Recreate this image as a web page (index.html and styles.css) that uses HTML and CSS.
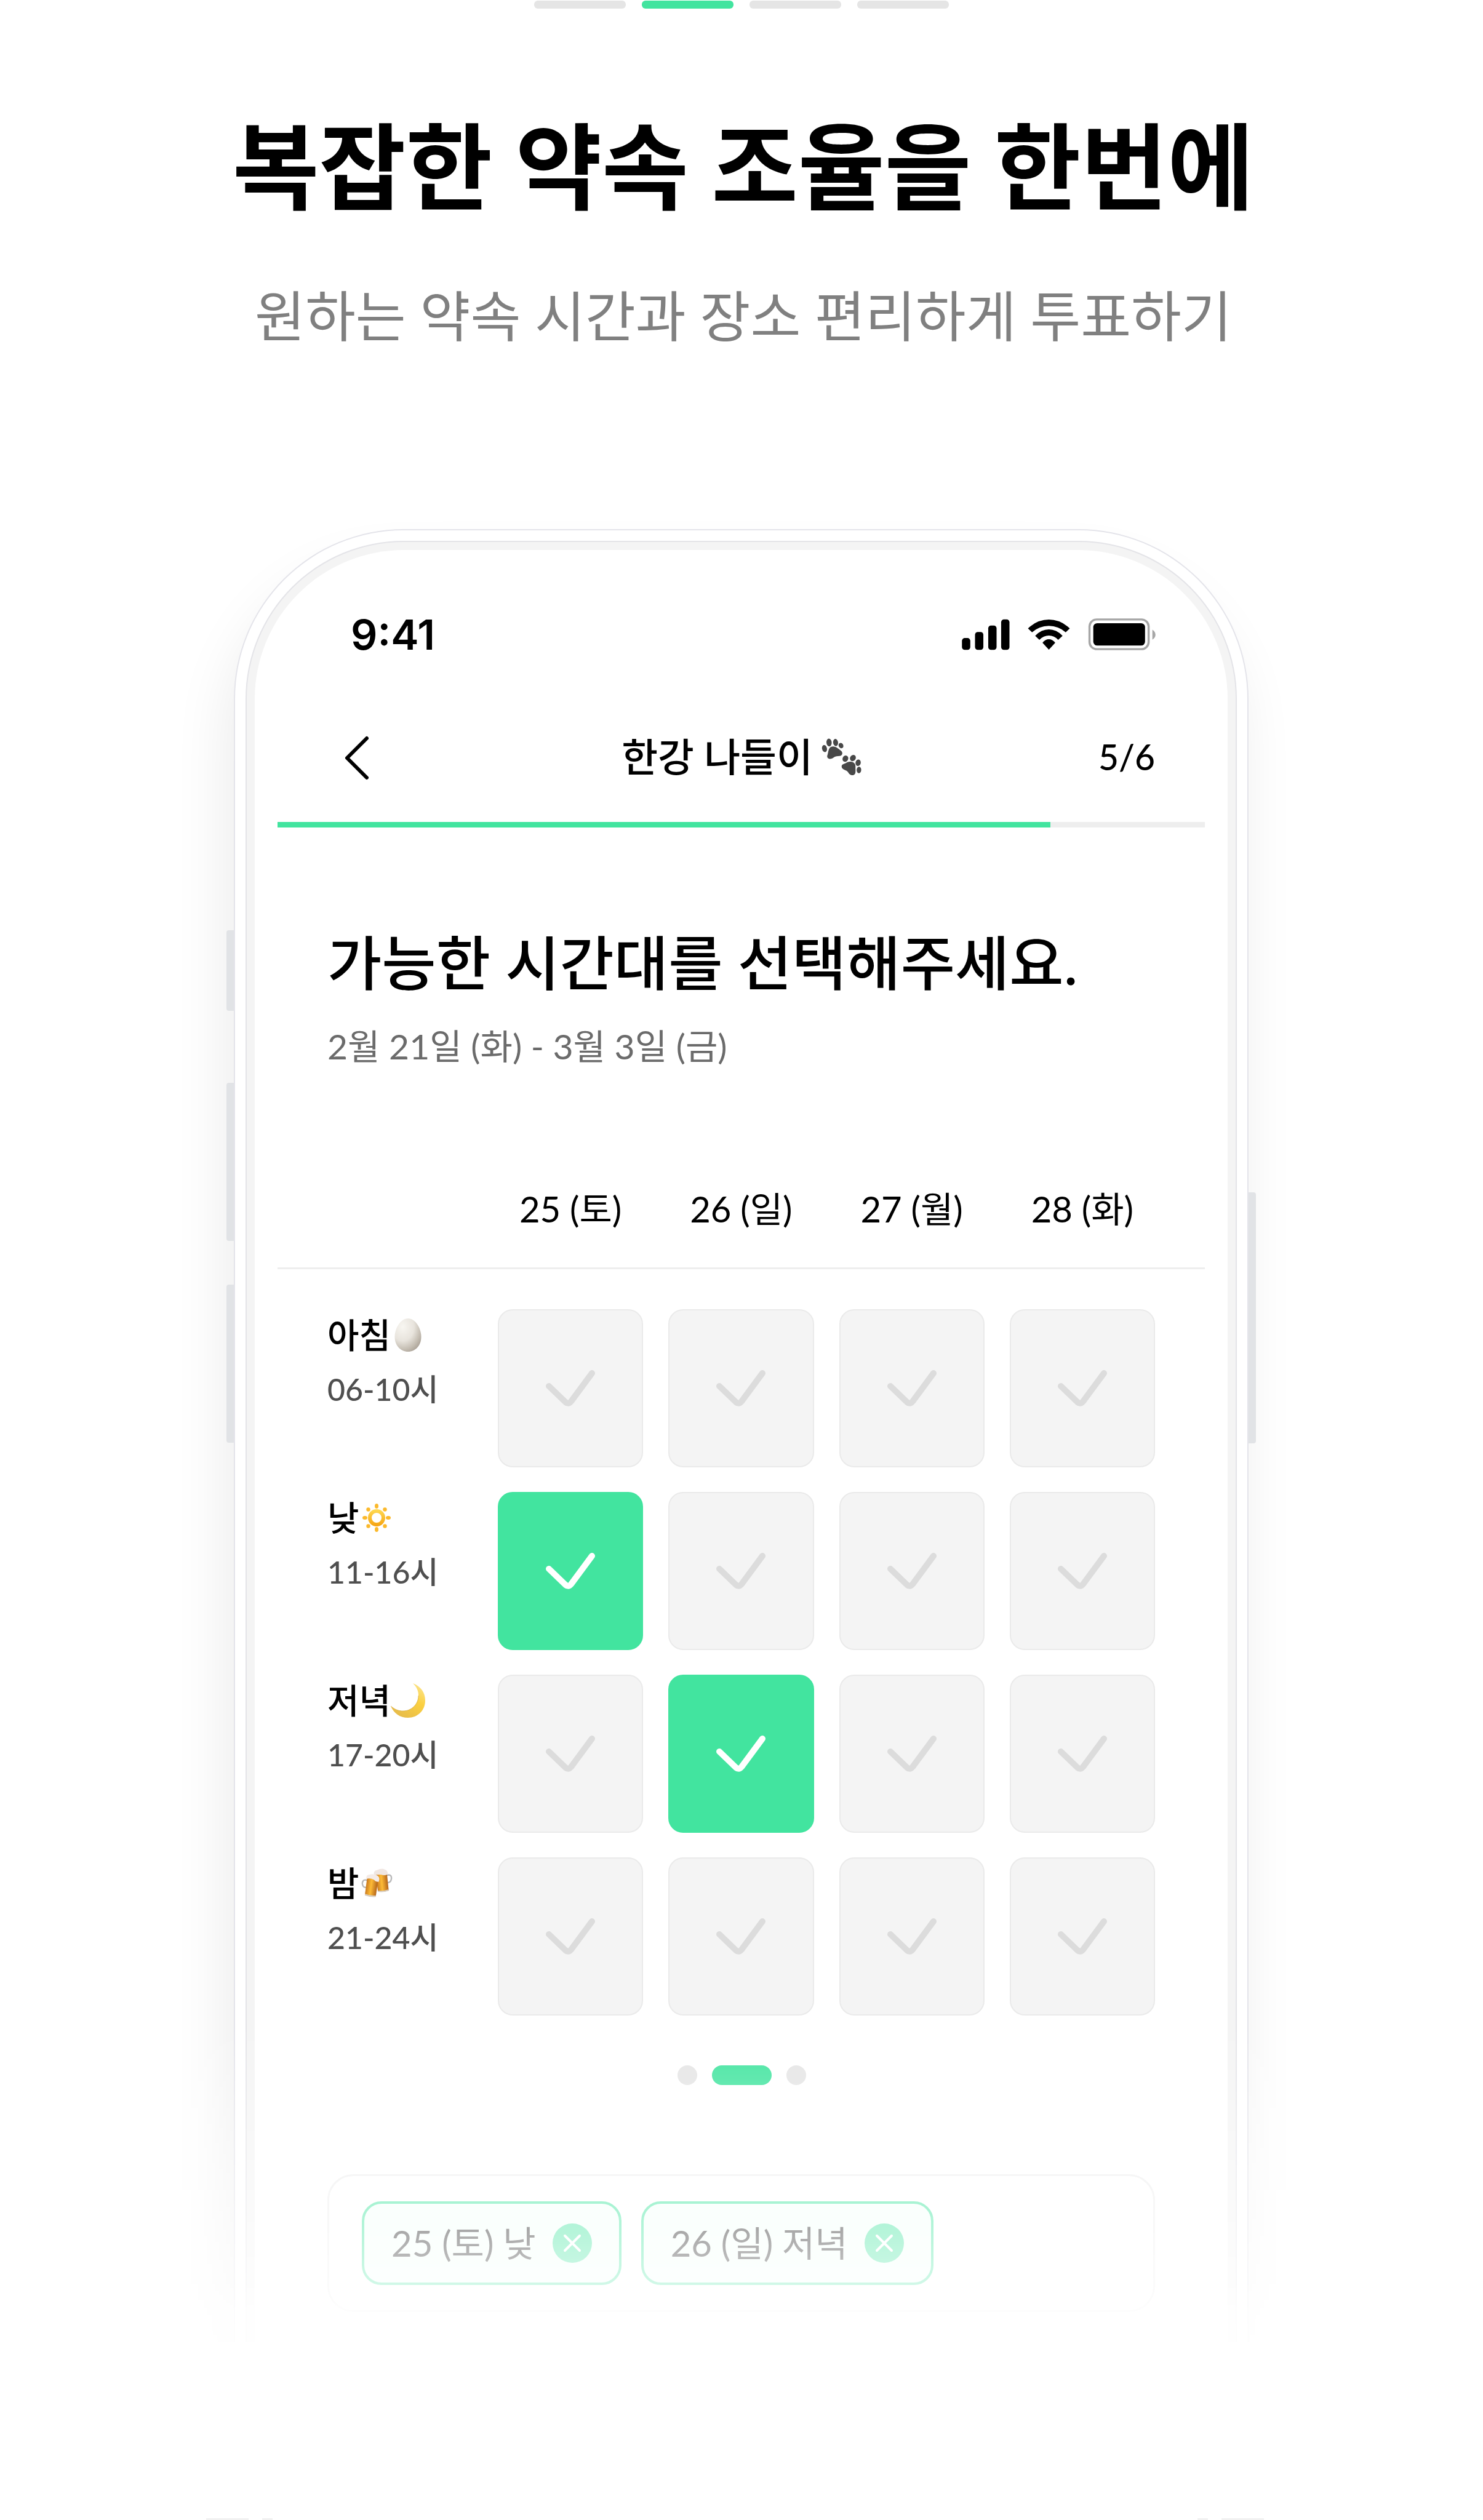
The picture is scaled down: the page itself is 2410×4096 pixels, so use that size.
FILE: index.html
```html
<!DOCTYPE html>
<html lang="ko">
<head>
<meta charset="utf-8">
<meta name="viewport" content="width=device-width, initial-scale=1">
<title>복잡한 약속 조율을 한번에</title>
<link rel="stylesheet" href="styles.css">
</head>
<body>
<svg class="defs" aria-hidden="true">
  <defs>
    <radialGradient id="eggFill" cx="0.3" cy="0.25" r="0.85">
      <stop offset="0" stop-color="#f8f6f1"/>
      <stop offset="0.5" stop-color="#e8e4dd"/>
      <stop offset="0.8" stop-color="#c5beb3"/>
      <stop offset="1" stop-color="#aaa196"/>
    </radialGradient>
    <linearGradient id="sunFill" x1="0" y1="0" x2="0" y2="1">
      <stop offset="0" stop-color="#ffdb55"/>
      <stop offset="1" stop-color="#f5a210"/>
    </linearGradient>
    <linearGradient id="moonFill" x1="1" y1="0" x2="0.4" y2="1">
      <stop offset="0" stop-color="#fbe79a"/>
      <stop offset="0.5" stop-color="#fbd040"/>
      <stop offset="1" stop-color="#e8bd4a"/>
    </linearGradient>
    <linearGradient id="beerFill" x1="0" y1="0" x2="1" y2="0">
      <stop offset="0" stop-color="#c9791f"/>
      <stop offset="0.45" stop-color="#fdbb36"/>
      <stop offset="1" stop-color="#b5651a"/>
    </linearGradient>
    <symbol id="check" viewBox="0 0 80 60">
      <path d="M5 26L32 52Q37 56 41 51L75 5" fill="none" stroke="currentColor" stroke-width="10" stroke-linecap="round" stroke-linejoin="round"/>
    </symbol>
    <symbol id="cross" viewBox="0 0 64 64">
      <circle cx="32" cy="32" r="32" fill="#42e49f"/>
      <path d="M20 20L44 44M44 20L20 44" fill="none" stroke="#fff" stroke-width="4" stroke-linecap="round"/>
    </symbol>
  </defs>
</svg>

<header class="intro">
  <ol class="steps" aria-label="소개 단계">
    <li class="step"></li>
    <li class="step step-current" aria-current="step"></li>
    <li class="step"></li>
    <li class="step"></li>
  </ol>
  <div class="intro-copy">
    <h1 class="intro-title">복잡한 약속 조율을 한번에</h1>
    <p class="intro-text">원하는 약속 시간과 장소 편리하게 투표하기</p>
  </div>
</header>

<main class="stage">
  <div class="phone">
    <span class="side-key key-mute"></span>
    <span class="side-key key-up"></span>
    <span class="side-key key-down"></span>
    <span class="side-key key-power"></span>
    <div class="bezel">
      <div class="screen">
        <div class="status">
          <span class="clock">9:41</span>
          <div class="status-icons">
            <svg class="signal" viewBox="47 56 292 196" aria-hidden="true">
              <rect x="47" y="177" width="51" height="72" rx="17"/>
              <rect x="127" y="140" width="51" height="109" rx="17"/>
              <rect x="208" y="100" width="51" height="149" rx="17"/>
              <rect x="287" y="63" width="51" height="186" rx="17"/>
            </svg>
            <svg class="wifi" viewBox="448 56 256 196" aria-hidden="true">
              <path d="M448 118Q505 64 576 64Q647 64 704 118L679 142Q635 102 576 102Q517 102 473 142Z"/>
              <path d="M492 163Q530 124 576 124Q622 124 660 163L633 188Q608 162 576 162Q544 162 518 188Z"/>
              <path d="M537 206Q554 184 576 184Q598 184 615 206L576 248Z"/>
            </svg>
            <svg class="battery" viewBox="813 56 413 196" aria-hidden="true">
              <rect x="820" y="63" width="362" height="182" rx="44" fill="none" stroke="#a6a6a6" stroke-width="13"/>
              <rect x="843" y="86" width="317" height="137" rx="24"/>
              <path d="M1205 126Q1224 138 1224 157Q1224 176 1205 187Z" fill="#a6a6a6"/>
            </svg>
          </div>
        </div>

        <nav class="topbar">
          <button class="back" type="button" aria-label="뒤로">
            <svg class="chevron" viewBox="0 0 40 72" aria-hidden="true"><path d="M36 4L4 36L36 68" fill="none" stroke="#000" stroke-width="6" stroke-linecap="round" stroke-linejoin="round"/></svg>
          </button>
          <div class="event">
            <span class="event-name">한강 나들이</span>
            <svg class="paws" viewBox="40 33 248 230" aria-hidden="true">
              <g fill="#484848">
                <ellipse cx="58" cy="96" rx="15" ry="22" transform="rotate(-12 58 96)"/>
                <ellipse cx="86" cy="59" rx="16" ry="24" transform="rotate(-4 86 59)"/>
                <ellipse cx="126" cy="59" rx="15" ry="22" transform="rotate(-8 126 59)"/>
                <ellipse cx="159" cy="78" rx="14" ry="17" transform="rotate(-30 159 78)"/>
                <path d="M110 83C130 83 141 97 158 108C174 120 168 140 150 141C137 142 126 142 118 148C108 156 99 160 88 159C76 157 72 146 76 136C82 120 80 83 110 83Z"/>
                <ellipse cx="186" cy="158" rx="17" ry="20" transform="rotate(28 186 158)"/>
                <ellipse cx="232" cy="154" rx="17" ry="20" transform="rotate(36 232 154)"/>
                <ellipse cx="264" cy="183" rx="16" ry="20" transform="rotate(12 264 183)"/>
                <ellipse cx="269" cy="227" rx="14" ry="20" transform="rotate(4 269 227)"/>
                <path d="M214 176C236 174 249 188 248 208C247 222 250 232 247 246C242 262 222 263 213 254C202 244 203 236 188 230C174 225 162 218 163 204C165 190 180 192 192 183C199 178 206 177 214 176Z"/>
              </g>
            </svg>
          </div>
          <span class="page-count">5/6</span>
        </nav>
        <progress class="progress" value="5" max="6" aria-label="진행률"></progress>

        <section class="question">
          <h2 class="question-title">가능한 시간대를 선택해주세요.</h2>
          <p class="question-range">2월 21일 (화) - 3월 3일 (금)</p>
        </section>

        <table class="slots">
          <thead class="slots-head">
            <tr class="slots-row">
              <td></td>
              <th class="day" scope="col">25 (토)</th>
              <th class="day" scope="col">26 (일)</th>
              <th class="day" scope="col">27 (월)</th>
              <th class="day" scope="col">28 (화)</th>
            </tr>
          </thead>
          <tbody class="slots-body">
            <tr class="slots-row">
              <th class="part" scope="row">
                <span class="part-name">아침<svg class="emoji" viewBox="0 0 56 56" aria-hidden="true"><path d="M28 1C40 1 49.500 17 49.500 31C49.500 45 40 55 28 55C16 55 6.500 45 6.500 31C6.500 17 16 1 28 1Z" fill="url(#eggFill)"/></svg></span>
                <span class="part-hours">06-10시</span>
              </th>
              <td><label class="slot"><input class="slot-input" type="checkbox" aria-label="25일 아침"><svg class="slot-check"><use href="#check"/></svg></label></td>
              <td><label class="slot"><input class="slot-input" type="checkbox" aria-label="26일 아침"><svg class="slot-check"><use href="#check"/></svg></label></td>
              <td><label class="slot"><input class="slot-input" type="checkbox" aria-label="27일 아침"><svg class="slot-check"><use href="#check"/></svg></label></td>
              <td><label class="slot"><input class="slot-input" type="checkbox" aria-label="28일 아침"><svg class="slot-check"><use href="#check"/></svg></label></td>
            </tr>
            <tr class="slots-row">
              <th class="part" scope="row">
                <span class="part-name">낮<svg class="emoji" viewBox="0 0 56 56" aria-hidden="true">
                  <path fill-rule="evenodd" d="M28 14A14 14 0 1 1 28 42A14 14 0 1 1 28 14ZM28 20A8 8 0 1 0 28 36A8 8 0 1 0 28 20Z" fill="url(#sunFill)"/>
                  <g fill="#fbb92c">
                    <ellipse cx="28" cy="9" rx="3" ry="4"/><ellipse cx="28" cy="47" rx="3" ry="4"/>
                    <ellipse cx="9" cy="28" rx="4" ry="3"/><ellipse cx="47" cy="28" rx="4" ry="3"/>
                    <circle cx="14.500" cy="14.500" r="3.200"/><circle cx="41.500" cy="14.500" r="3.200"/>
                    <circle cx="14.500" cy="41.500" r="3.200"/><circle cx="41.500" cy="41.500" r="3.200"/>
                  </g></svg></span>
                <span class="part-hours">11-16시</span>
              </th>
              <td><label class="slot"><input class="slot-input" type="checkbox" aria-label="25일 낮" checked><svg class="slot-check"><use href="#check"/></svg></label></td>
              <td><label class="slot"><input class="slot-input" type="checkbox" aria-label="26일 낮"><svg class="slot-check"><use href="#check"/></svg></label></td>
              <td><label class="slot"><input class="slot-input" type="checkbox" aria-label="27일 낮"><svg class="slot-check"><use href="#check"/></svg></label></td>
              <td><label class="slot"><input class="slot-input" type="checkbox" aria-label="28일 낮"><svg class="slot-check"><use href="#check"/></svg></label></td>
            </tr>
            <tr class="slots-row">
              <th class="part" scope="row">
                <span class="part-name">저녁<svg class="emoji" viewBox="0 0 56 56" aria-hidden="true"><path d="M36 0C49 5 56 15 56 28C56 44 44 56 28 56C15 56 5 49 0 37C7 43 13 45 20 45C34 45 45 34 45 20C45 12 42 6 36 0Z" fill="url(#moonFill)"/><path d="M0 37C7 43 13 45 20 45C34 45 45 34 45 20" fill="none" stroke="#d3a63c" stroke-width="1" opacity="0.700"/></svg></span>
                <span class="part-hours">17-20시</span>
              </th>
              <td><label class="slot"><input class="slot-input" type="checkbox" aria-label="25일 저녁"><svg class="slot-check"><use href="#check"/></svg></label></td>
              <td><label class="slot"><input class="slot-input" type="checkbox" aria-label="26일 저녁" checked><svg class="slot-check"><use href="#check"/></svg></label></td>
              <td><label class="slot"><input class="slot-input" type="checkbox" aria-label="27일 저녁"><svg class="slot-check"><use href="#check"/></svg></label></td>
              <td><label class="slot"><input class="slot-input" type="checkbox" aria-label="28일 저녁"><svg class="slot-check"><use href="#check"/></svg></label></td>
            </tr>
            <tr class="slots-row">
              <th class="part" scope="row">
                <span class="part-name">밤<svg class="emoji" viewBox="34 32 209 209" aria-hidden="true">
                  <g transform="rotate(-6 170 125)">
                    <path d="M204 92C230 86 234 104 228 120C225 130 216 137 204 137" fill="none" stroke="#b9b9ba" stroke-width="9"/>
                    <path d="M138 76H206V184Q172 192 140 184Z" fill="url(#beerFill)"/>
                    <path d="M139 178Q172 186 206 178V186Q172 195 139 186Z" fill="#d8cdc0"/>
                    <path d="M128 84Q122 56 150 54Q178 44 196 56Q214 64 210 86Q190 94 170 84Q146 80 128 84Z" fill="#f0e6e1"/>
                  </g>
                  <g transform="rotate(8 105 155)">
                    <path d="M76 122C50 118 46 138 53 154C57 164 66 168 77 166" fill="none" stroke="#b9b9ba" stroke-width="9"/>
                    <path d="M74 104H142V212Q108 220 75 212Z" fill="url(#beerFill)"/>
                    <path d="M75 206Q108 214 142 206V215Q108 223 75 215Z" fill="#d8cdc0"/>
                    <path d="M70 114Q64 90 86 86Q106 76 130 84Q154 92 147 122Q130 126 118 114Q96 104 70 114Z" fill="#f4ebe7"/>
                  </g></svg></span>
                <span class="part-hours">21-24시</span>
              </th>
              <td><label class="slot"><input class="slot-input" type="checkbox" aria-label="25일 밤"><svg class="slot-check"><use href="#check"/></svg></label></td>
              <td><label class="slot"><input class="slot-input" type="checkbox" aria-label="26일 밤"><svg class="slot-check"><use href="#check"/></svg></label></td>
              <td><label class="slot"><input class="slot-input" type="checkbox" aria-label="27일 밤"><svg class="slot-check"><use href="#check"/></svg></label></td>
              <td><label class="slot"><input class="slot-input" type="checkbox" aria-label="28일 밤"><svg class="slot-check"><use href="#check"/></svg></label></td>
            </tr>
          </tbody>
        </table>

        <div class="pager">
          <button class="dot" type="button" aria-label="이전 날짜"></button>
          <button class="dot dot-current" type="button" aria-label="현재 날짜"></button>
          <button class="dot" type="button" aria-label="다음 날짜"></button>
        </div>

        <ul class="tray">
          <li class="chip">25 (토) 낮<button class="chip-remove" type="button" aria-label="25 (토) 낮 삭제"><svg class="cross"><use href="#cross"/></svg></button></li>
          <li class="chip">26 (일) 저녁<button class="chip-remove" type="button" aria-label="26 (일) 저녁 삭제"><svg class="cross"><use href="#cross"/></svg></button></li>
        </ul>
      </div>
    </div>
  </div>
</main>

<footer class="next" aria-hidden="true">
  <span class="edge edge-frame"></span>
  <span class="edge edge-bezel"></span>
  <span class="edge-gap"></span>
  <span class="edge edge-bezel"></span>
  <span class="edge edge-frame edge-right"></span>
</footer>
</body>
</html>
```

FILE: styles.css
```css
:root {
  --green: #42e49f;
  --line: #eeeeee;
  --gutter: 81px;
}

* {
  box-sizing: border-box;
  margin: 0;
  padding: 0;
}

body {
  display: flex;
  flex-direction: column;
  min-height: 100vh;
  background: #fff;
  color: #000;
  font-family: Lato, "Noto Sans CJK KR", sans-serif;
}

button {
  border: 0;
  background: none;
  font: inherit;
}

ol,
ul {
  list-style: none;
}

svg {
  display: block;
}

.defs {
  position: absolute;
  width: 0;
  height: 0;
}

/* Intro */

.intro {
  padding-top: 1px;
  text-align: center;
}

.steps {
  display: flex;
  justify-content: center;
  gap: 26px;
}

.step {
  width: 149px;
  height: 13px;
  border-radius: 6px;
  background: #e5e5e5;
}

.step-current {
  background: var(--green);
}

.intro-copy {
  padding: 156px 0 0 6px;
}

.intro-title {
  font-size: 153px;
  line-height: 200px;
  font-weight: 700;
}

.intro-text {
  margin-top: 83px;
  font-size: 89px;
  line-height: 120px;
  color: #808080;
}

/* Phone, fading out towards its lower end */

.stage {
  margin-top: 167px;
  padding: 120px 381px 0 380px;
  overflow: hidden;
  mask-image: linear-gradient(
    to bottom,
    #000 calc(100% - 514px),
    rgba(0, 0, 0, 0.46) calc(100% - 226px),
    rgba(0, 0, 0, 0.25) calc(100% - 96px),
    rgba(0, 0, 0, 0.1) calc(100% - 49px),
    rgba(0, 0, 0, 0.08) 100%
  );
}

.phone {
  position: relative;
  padding: 17px 17px 0;
  border: 2px solid #e4e4ea;
  border-bottom: 0;
  border-radius: 276px 276px 0 0;
  background: #fff;
  box-shadow: -12px 60px 90px rgba(0, 0, 0, 0.08);
}

.side-key {
  position: absolute;
  left: -14px;
  width: 12px;
  height: 257px;
  border-radius: 4px 0 0 4px;
  background: #e1e3e6;
}

.key-mute {
  top: 650px;
  height: 131px;
}

.key-up {
  top: 898px;
}

.key-down {
  top: 1226px;
}

.key-power {
  top: 1076px;
  right: -14px;
  left: auto;
  height: 408px;
  border-radius: 0 4px 4px 0;
}

.bezel {
  padding: 13px 13px 0;
  border: 2px solid #e4e4e8;
  border-bottom: 0;
  border-radius: 257px 257px 0 0;
  background: #f4f4f4;
}

.screen {
  padding: 97px 37px 49px;
  border-radius: 242px 242px 0 0;
  background: #fff;
}

.status {
  display: flex;
  justify-content: space-between;
  align-items: center;
  padding: 0 79px 0 119px;
}

.clock {
  font-family: Inter, "Liberation Sans", sans-serif;
  font-size: 68px;
  line-height: 80px;
  font-weight: 600;
}

.status-icons {
  display: flex;
  gap: 29px;
}

.signal {
  width: 78px;
  height: 52px;
}

.wifi {
  width: 69px;
  height: 52px;
}

.battery {
  width: 111px;
  height: 52px;
}

.topbar {
  display: grid;
  grid-template-columns: 1fr auto 1fr;
  align-items: center;
  height: 120px;
  margin-top: 99px;
  padding: 0 var(--gutter);
}

.back {
  justify-self: start;
  padding: 4px 28px 0;
}

.chevron {
  width: 40px;
  height: 72px;
}

.event {
  display: flex;
  align-items: center;
  gap: 14px;
  padding-left: 2px;
}

.event-name {
  font-size: 64px;
  line-height: 80px;
  font-weight: 500;
}

.paws {
  width: 66px;
  height: 61px;
}

.page-count {
  justify-self: end;
  font-size: 57px;
  line-height: 80px;
  font-weight: 500;
}

.progress {
  display: block;
  width: 100%;
  height: 9px;
  margin-top: 46px;
  border: 0;
  background: var(--line);
  appearance: none;
}

.progress::-webkit-progress-bar {
  background: var(--line);
}

.progress::-webkit-progress-value {
  background: var(--green);
}

.question {
  padding: 159px var(--gutter) 0;
}

.question-title {
  font-size: 96px;
  line-height: 120px;
  font-weight: 500;
}

.question-range {
  margin-top: 36px;
  font-size: 57px;
  line-height: 80px;
  color: #6b6b6b;
}

/* Time slots */

.slots,
.slots-head {
  display: block;
}

.slots {
  margin-top: 185px;
}

.slots-head {
  padding: 0 var(--gutter) 55px;
  border-bottom: 3px solid var(--line);
}

.slots-body {
  display: grid;
  gap: 40px;
  padding: 65px var(--gutter) 0;
}

.slots-row {
  display: grid;
  grid-template-columns: 236px repeat(4, 1fr);
  gap: 41px;
}

.day {
  font-size: 58px;
  line-height: 80px;
  font-weight: 400;
  white-space: nowrap;
}

.part {
  padding-top: 2px;
  font-weight: 400;
  text-align: left;
}

.part-name {
  display: flex;
  align-items: center;
  font-size: 56px;
  line-height: 80px;
  font-weight: 500;
}

.emoji {
  width: 56px;
  height: 56px;
}

.part-hours {
  display: block;
  margin-top: 18px;
  font-size: 50px;
  line-height: 60px;
  font-weight: 500;
  color: #4f4f4f;
}

.slot {
  display: grid;
  place-items: center;
  height: 257px;
}

.slot-input,
.slot-check {
  grid-area: 1 / 1;
}

.slot-input {
  width: 100%;
  height: 100%;
  border: 2px solid #eaeaea;
  border-radius: 24px;
  background: #f4f4f4;
  appearance: none;
}

.slot-input:checked {
  border-color: var(--green);
  background: var(--green);
}

.slot-check {
  width: 80px;
  height: 60px;
  color: #dcdcdc;
}

.slot-input:checked + .slot-check {
  color: #fff;
}

.pager {
  display: flex;
  justify-content: center;
  gap: 24px;
  margin-top: 81px;
  padding-left: 2px;
}

.dot {
  width: 32px;
  height: 32px;
  border-radius: 16px;
  background: #e5e5e5;
}

.dot-current {
  width: 97px;
  background: var(--green);
}

/* Chosen slots */

.tray {
  display: flex;
  gap: 32px;
  margin: 145px var(--gutter) 0;
  padding: 41px 53px;
  border: 3px solid var(--line);
  border-radius: 42px;
}

.chip {
  display: flex;
  align-items: center;
  gap: 27px;
  height: 136px;
  padding: 0 44px;
  border: 4px solid var(--green);
  border-radius: 32px;
  background: #f3fefa;
  font-size: 58px;
  line-height: 80px;
  color: #222;
  white-space: nowrap;
}

.cross {
  width: 64px;
  height: 64px;
}

/* Upper edge of the next device */

.next {
  display: flex;
  height: 3px;
  margin-top: auto;
  padding: 0 356px 0 335px;
}

.edge {
  background: #f1f1f1;
}

.edge-frame {
  width: 69px;
  margin-right: 22px;
}

.edge-bezel {
  width: 17px;
}

.edge-gap {
  flex: 1;
}

.edge-right {
  margin: 0 0 0 22px;
}
```
